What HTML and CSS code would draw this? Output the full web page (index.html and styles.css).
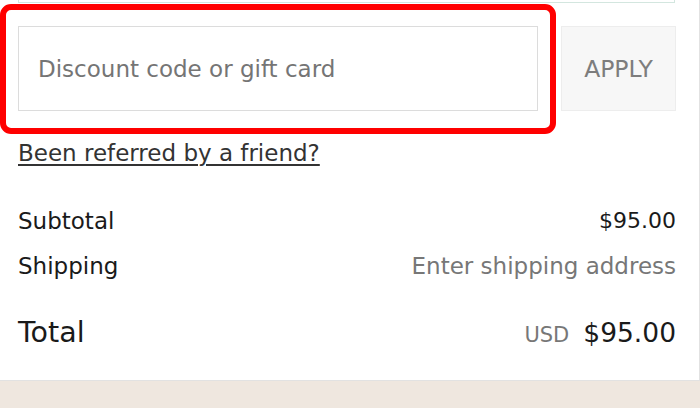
FILE: index.html
```html
<!DOCTYPE html>
<html>
<head>
<meta charset="utf-8">
<link rel="stylesheet" href="styles.css">
</head>
<body>
<div class="page">
  <div class="prev-box"></div>
  <div class="discount">
    <div class="field">Discount code or gift card</div>
    <button class="apply">APPLY</button>
    <div class="highlight"></div>
  </div>
  <a class="referral" href="#">Been referred by a friend?</a>
  <div class="lines">
    <div class="line"><span>Subtotal</span><span class="amount">$95.00</span></div>
    <div class="line"><span>Shipping</span><span class="muted">Enter shipping address</span></div>
  </div>
  <div class="total">
    <span class="total-label">Total</span>
    <span class="total-value"><span class="currency">USD</span><span class="total-amount">$95.00</span></span>
  </div>
</div>
<div class="footer-band"></div>
</body>
</html>
```

FILE: styles.css
```css
html, body {
  margin: 0;
  padding: 0;
  background: #ffffff;
}
body {
  font-family: "DejaVu Sans", "Liberation Sans", sans-serif;
  color: #1a1a1a;
  width: 700px;
  height: 408px;
  overflow: hidden;
}
.page {
  box-sizing: border-box;
  width: 700px;
  height: 381px;
  padding: 0 23px 0 18px;
  border-right: 1px solid #e2e2e2;
  border-bottom: 1px solid #e2e2e2;
}
.prev-box {
  height: 2px;
  border: 1px solid #d3e6df;
  border-top: none;
  margin-right: 1px;
}
.discount {
  position: relative;
  display: flex;
  gap: 23px;
  margin-top: 23px;
}
.field {
  box-sizing: border-box;
  flex: 0 0 520px;
  height: 85px;
  border: 1px solid #dcdcdc;
  padding-left: 19px;
  display: flex;
  align-items: center;
  font-size: 23px;
  color: #757575;
}
.apply {
  box-sizing: border-box;
  flex: 1;
  height: 85px;
  border: 1px solid #ededed;
  background: #f7f7f7;
  font-family: inherit;
  font-size: 23.5px;
  color: #7d7d7d;
  padding: 0;
}
.highlight {
  position: absolute;
  left: -18px;
  top: -22px;
  width: 556px;
  height: 130px;
  box-sizing: border-box;
  border: 6px solid #ff0000;
  border-radius: 11px;
  pointer-events: none;
}
.referral {
  display: block;
  margin-top: 28px;
  font-size: 23px;
  line-height: 28px;
  color: #333333;
  text-decoration: underline;
  text-underline-offset: 3px;
  text-decoration-thickness: 1.5px;
}
.lines {
  margin-top: 40px;
}
.line {
  display: flex;
  justify-content: space-between;
  font-size: 23px;
  line-height: 28px;
  margin-bottom: 17px;
}
.amount {
  font-size: 22px;
}
.muted {
  color: #777777;
}
.total {
  display: flex;
  justify-content: space-between;
  align-items: baseline;
  line-height: 36px;
  margin-top: 35px;
}
.total-label {
  font-size: 28.5px;
}
.total-value {
  display: flex;
  align-items: baseline;
  gap: 14px;
}
.currency {
  font-size: 21px;
  color: #777777;
}
.total-amount {
  font-size: 26.5px;
}
.footer-band {
  height: 27px;
  background: #efe7df;
}
```
